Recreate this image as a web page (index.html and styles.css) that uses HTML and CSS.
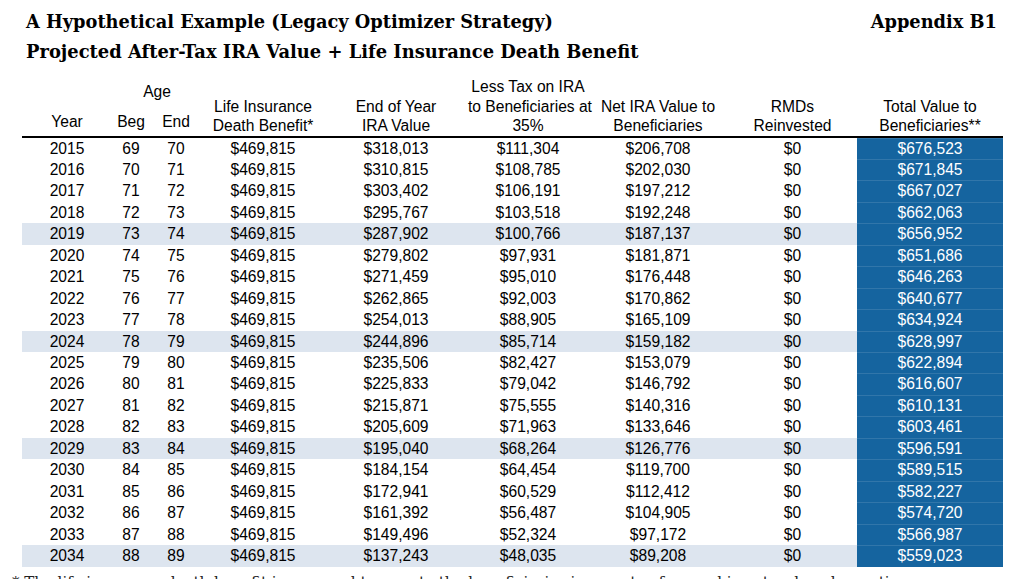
FILE: index.html
```html
<!DOCTYPE html>
<html>
<head>
<meta charset="utf-8">
<link rel="stylesheet" href="styles.css">
</head>
<body>
<div class="page">
  <div class="titles">
    <div class="title-row">
      <h1 class="title t1">A Hypothetical Example (Legacy Optimizer Strategy)</h1>
      <div class="title t1 appendix">Appendix B1</div>
    </div>
    <h2 class="title t2">Projected After-Tax IRA Value + Life Insurance Death Benefit</h2>
  </div>

  <table class="grid">
    <colgroup>
      <col class="c-year"><col class="c-beg"><col class="c-end"><col class="c-life"><col class="c-eoy"><col class="c-tax"><col class="c-net"><col class="c-rmd"><col class="c-total">
    </colgroup>
    <thead>
      <tr class="h1">
        <th></th>
        <th colspan="2" class="age">Age</th>
        <th rowspan="2" class="multi">Life Insurance<br>Death Benefit*</th>
        <th rowspan="2" class="multi">End of Year<br>IRA Value</th>
        <th rowspan="2" class="multi">Less Tax on IRA<br>to Beneficiaries at<br>35%</th>
        <th rowspan="2" class="multi">Net IRA Value to<br>Beneficiaries</th>
        <th rowspan="2" class="multi">RMDs<br>Reinvested</th>
        <th rowspan="2" class="multi">Total Value to<br>Beneficiaries**</th>
      </tr>
      <tr class="h2">
        <th class="low">Year</th>
        <th class="low">Beg</th>
        <th class="low">End</th>
      </tr>
    </thead>
    <tbody>
      <tr><td>2015</td><td>69</td><td>70</td><td>$469,815</td><td>$318,013</td><td>$111,304</td><td>$206,708</td><td>$0</td><td class="tot">$676,523</td></tr>
      <tr><td>2016</td><td>70</td><td>71</td><td>$469,815</td><td>$310,815</td><td>$108,785</td><td>$202,030</td><td>$0</td><td class="tot">$671,845</td></tr>
      <tr><td>2017</td><td>71</td><td>72</td><td>$469,815</td><td>$303,402</td><td>$106,191</td><td>$197,212</td><td>$0</td><td class="tot">$667,027</td></tr>
      <tr><td>2018</td><td>72</td><td>73</td><td>$469,815</td><td>$295,767</td><td>$103,518</td><td>$192,248</td><td>$0</td><td class="tot">$662,063</td></tr>
      <tr class="hl"><td>2019</td><td>73</td><td>74</td><td>$469,815</td><td>$287,902</td><td>$100,766</td><td>$187,137</td><td>$0</td><td class="tot">$656,952</td></tr>
      <tr><td>2020</td><td>74</td><td>75</td><td>$469,815</td><td>$279,802</td><td>$97,931</td><td>$181,871</td><td>$0</td><td class="tot">$651,686</td></tr>
      <tr><td>2021</td><td>75</td><td>76</td><td>$469,815</td><td>$271,459</td><td>$95,010</td><td>$176,448</td><td>$0</td><td class="tot">$646,263</td></tr>
      <tr><td>2022</td><td>76</td><td>77</td><td>$469,815</td><td>$262,865</td><td>$92,003</td><td>$170,862</td><td>$0</td><td class="tot">$640,677</td></tr>
      <tr><td>2023</td><td>77</td><td>78</td><td>$469,815</td><td>$254,013</td><td>$88,905</td><td>$165,109</td><td>$0</td><td class="tot">$634,924</td></tr>
      <tr class="hl"><td>2024</td><td>78</td><td>79</td><td>$469,815</td><td>$244,896</td><td>$85,714</td><td>$159,182</td><td>$0</td><td class="tot">$628,997</td></tr>
      <tr><td>2025</td><td>79</td><td>80</td><td>$469,815</td><td>$235,506</td><td>$82,427</td><td>$153,079</td><td>$0</td><td class="tot">$622,894</td></tr>
      <tr><td>2026</td><td>80</td><td>81</td><td>$469,815</td><td>$225,833</td><td>$79,042</td><td>$146,792</td><td>$0</td><td class="tot">$616,607</td></tr>
      <tr><td>2027</td><td>81</td><td>82</td><td>$469,815</td><td>$215,871</td><td>$75,555</td><td>$140,316</td><td>$0</td><td class="tot">$610,131</td></tr>
      <tr><td>2028</td><td>82</td><td>83</td><td>$469,815</td><td>$205,609</td><td>$71,963</td><td>$133,646</td><td>$0</td><td class="tot">$603,461</td></tr>
      <tr class="hl"><td>2029</td><td>83</td><td>84</td><td>$469,815</td><td>$195,040</td><td>$68,264</td><td>$126,776</td><td>$0</td><td class="tot">$596,591</td></tr>
      <tr><td>2030</td><td>84</td><td>85</td><td>$469,815</td><td>$184,154</td><td>$64,454</td><td>$119,700</td><td>$0</td><td class="tot">$589,515</td></tr>
      <tr><td>2031</td><td>85</td><td>86</td><td>$469,815</td><td>$172,941</td><td>$60,529</td><td>$112,412</td><td>$0</td><td class="tot">$582,227</td></tr>
      <tr><td>2032</td><td>86</td><td>87</td><td>$469,815</td><td>$161,392</td><td>$56,487</td><td>$104,905</td><td>$0</td><td class="tot">$574,720</td></tr>
      <tr><td>2033</td><td>87</td><td>88</td><td>$469,815</td><td>$149,496</td><td>$52,324</td><td>$97,172</td><td>$0</td><td class="tot">$566,987</td></tr>
      <tr class="hl"><td>2034</td><td>88</td><td>89</td><td>$469,815</td><td>$137,243</td><td>$48,035</td><td>$89,208</td><td>$0</td><td class="tot">$559,023</td></tr>
    </tbody>
  </table>
  <p class="note">* The life insurance death benefit is assumed to pass to the beneficiaries income tax free and is not reduced over time.</p>
</div>
</body>
</html>
```

FILE: styles.css
```css
html, body {
  margin: 0;
  padding: 0;
  background: #fff;
  color: #000;
}
body {
  overflow: hidden;
}
.page {
  width: 1024px;
  height: 579px;
  overflow: hidden;
}
.titles {
  padding: 7px 27px 0 26px;
}
.title-row {
  display: flex;
  justify-content: space-between;
  align-items: baseline;
}
.title {
  margin: 0;
  font-family: "DejaVu Serif", "Liberation Serif", serif;
  font-weight: bold;
  line-height: 30px;
  color: #000;
}
.t1 {
  font-size: 17.8px;
}
.t2 {
  font-size: 17.9px;
}
.grid {
  margin: 10px 0 0 22px;
  width: 981px;
  table-layout: fixed;
  border-collapse: collapse;
  font-family: "Liberation Sans", Arial, sans-serif;
  font-size: 15.6px;
  color: #000;
}
.c-year { width: 90px; }
.c-beg { width: 38px; }
.c-end { width: 52px; }
.c-life { width: 122px; }
.c-eoy { width: 144px; }
.c-tax { width: 120px; }
.c-net { width: 140px; }
.c-rmd { width: 129px; }
.c-total { width: 146px; }
.grid th {
  font-weight: normal;
  padding: 0;
  text-align: center;
  vertical-align: bottom;
  line-height: 19.5px;
  white-space: nowrap;
}
.grid thead tr.h2 th,
.grid thead th.multi {
  border-bottom: 2px solid #000;
}
.h1 { height: 24px; }
.h2 { height: 34.5px; }
.grid th.low {
  padding-bottom: 4.5px;
}
.grid td {
  padding: 0;
  height: 21.45px;
  line-height: 21.45px;
  text-align: center;
  white-space: nowrap;
}
.grid tr.hl td {
  background: #dde5ef;
}
.grid td.tot,
.grid tr.hl td.tot {
  background: #15649f;
  color: #fff;
  box-shadow: inset 0 1px 0 rgba(255, 255, 255, 0.12);
}
.note {
  margin: 5px 0 0 12px;
  font-family: "DejaVu Serif", "Liberation Serif", serif;
  font-size: 15px;
  line-height: 20px;
  color: #222;
}
```
